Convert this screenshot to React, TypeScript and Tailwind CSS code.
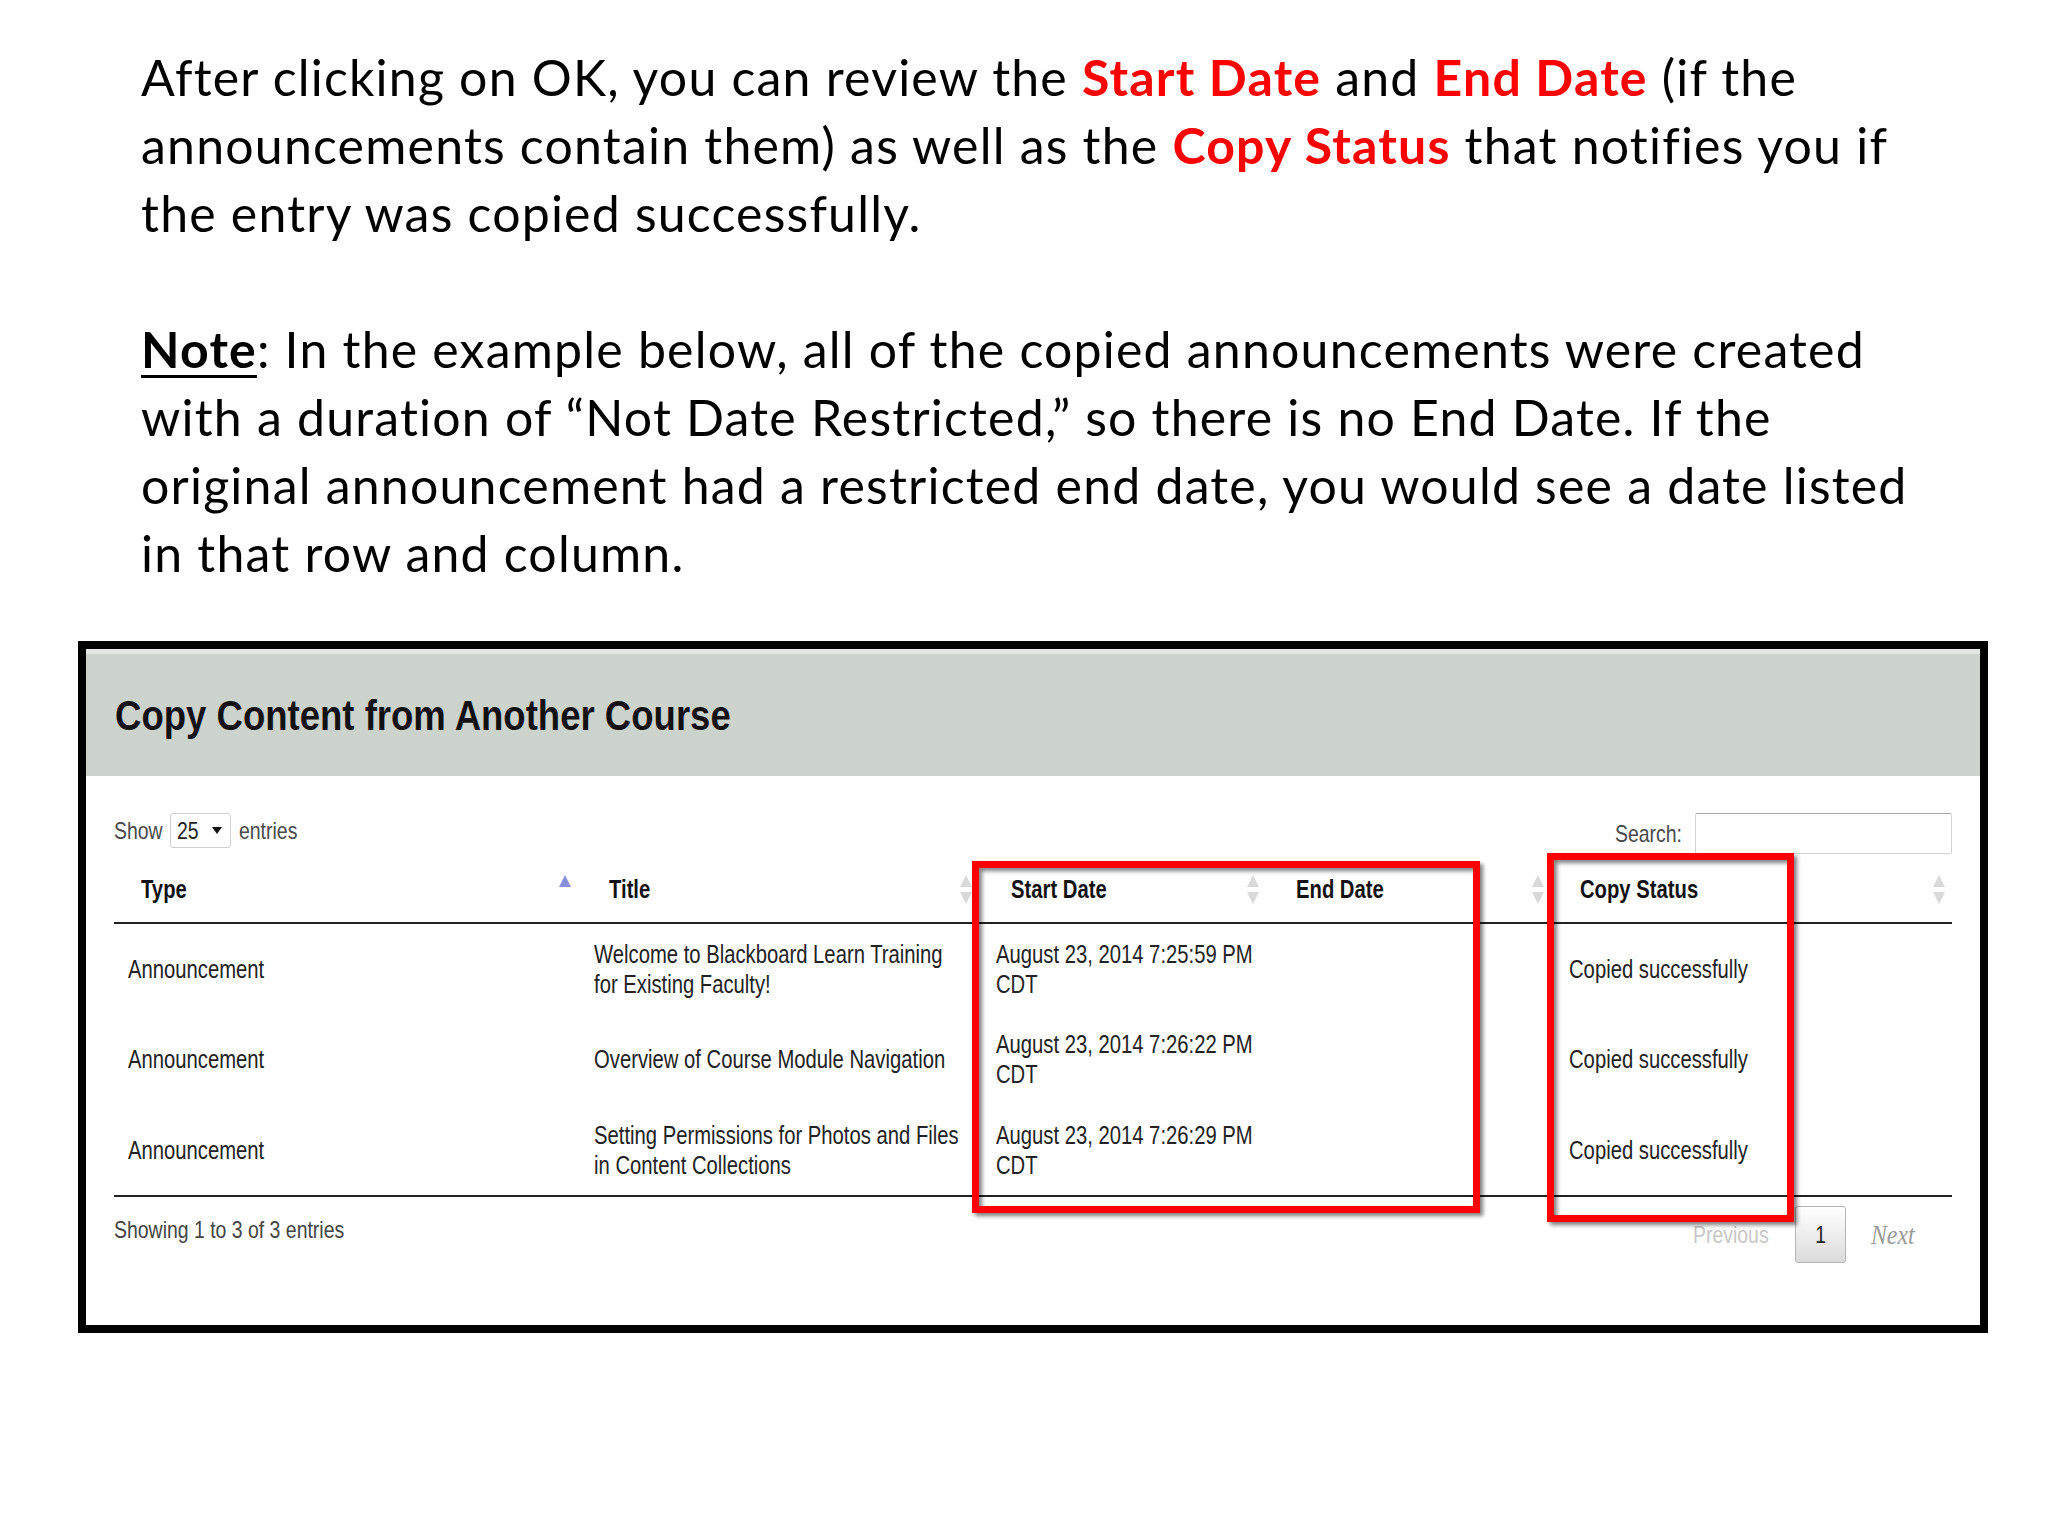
import React from 'react';

const N = 'inline-block origin-left scale-x-[0.81] whitespace-nowrap';
const RED = 'font-bold text-[#ff0000]';

function SortIcon({ asc = false }: { asc?: boolean }) {
  return (
    <svg width="12" height="29" viewBox="0 0 12 29" className="shrink-0">
      <polygon points="6,0 12,12 0,12" fill={asc ? '#8a8fdc' : '#d9d9d9'} />
      {!asc && <polygon points="0,17 12,17 6,29" fill="#d9d9d9" />}
    </svg>
  );
}

const rows = [
  {
    title: ['Welcome to Blackboard Learn Training', 'for Existing Faculty!'],
    start: ['August 23, 2014 7:25:59 PM', 'CDT'],
    h: 'h-[90px]',
  },
  {
    title: ['Overview of Course Module Navigation'],
    start: ['August 23, 2014 7:26:22 PM', 'CDT'],
    h: 'h-[90px]',
  },
  {
    title: ['Setting Permissions for Photos and Files', 'in Content Collections'],
    start: ['August 23, 2014 7:26:29 PM', 'CDT'],
    h: 'h-[91px]',
  },
];

function Lines({ lines }: { lines: string[] }) {
  return (
    <span className={N}>
      {lines.map((l, i) => (
        <React.Fragment key={i}>
          {i > 0 && <br />}
          {l}
        </React.Fragment>
      ))}
    </span>
  );
}

export default function App() {
  return (
    <div className="w-[2048px] h-[1536px] bg-white overflow-hidden">
      {/* slide text */}
      <div className="pl-[141px] pt-[43px] font-['Lato',sans-serif] text-[50px] leading-[68px] tracking-[1.2px] text-black">
        <div className="whitespace-nowrap">
          After clicking on OK, you can review the <span className={RED}>Start Date</span> and{' '}
          <span className={RED}>End Date</span> (if the
        </div>
        <div className="whitespace-nowrap">
          announcements contain them) as well as the <span className={RED}>Copy Status</span> that notifies you if
        </div>
        <div className="whitespace-nowrap">the entry was copied successfully.</div>
        <div className="h-[68px]" />
        <div className="whitespace-nowrap">
          <span className="font-bold underline decoration-[3px] underline-offset-[7px]">Note</span>: In the example
          below, all of the copied announcements were created
        </div>
        <div className="whitespace-nowrap">
          with a duration of “Not Date Restricted,” so there is no End Date. If the
        </div>
        <div className="whitespace-nowrap">
          original announcement had a restricted end date, you would see a date listed
        </div>
        <div className="whitespace-nowrap">in that row and column.</div>
      </div>

      {/* screenshot */}
      <div className="relative mt-[54px] ml-[78px] w-[1910px] h-[692px] border-8 border-black font-['Liberation_Sans',Arial,sans-serif]">
        <div className="h-[127px] bg-[#ccd2cc] border-t-[5px] border-[#e2e5e2] pl-[29px] flex items-center">
          <span className="inline-block origin-left scale-x-[0.87] whitespace-nowrap text-[42px] font-bold text-[#111]">
            Copy Content from Another Course
          </span>
        </div>

        <div className="px-[28px] pt-[37px]">
          {/* controls */}
          <div className="h-[44px] flex justify-between items-start text-[24px] text-[#4a4a4a]">
            <div className="h-[35px] flex items-center">
              <div className="w-[56px]">
                <span className={N}>Show</span>
              </div>
              <div className="w-[61px] h-[35px] border border-[#cfcfcf] rounded-[3px] flex items-center justify-between pl-[6px] pr-[8px] text-[#222]">
                <span className={N}>25</span>
                <svg width="10" height="7" viewBox="0 0 10 7">
                  <polygon points="0,0 10,0 5,7" fill="#111" />
                </svg>
              </div>
              <div className="ml-[8px]">
                <span className={N}>entries</span>
              </div>
            </div>
            <div className="flex items-center">
              <div className="w-[80px]">
                <span className={N}>Search:</span>
              </div>
              <div className="w-[257px] h-[41px] border border-[#d4d4d4] border-t-[#a9a9a9] rounded-[2px]" />
            </div>
          </div>

          {/* table head */}
          <div className="h-[67px] flex items-center border-b-2 border-[#222] text-[25px] font-bold text-[#111]">
            <div className="w-[466px] h-full flex items-center justify-between pl-[27px] pr-[9px]">
              <span className={N}>Type</span>
              <SortIcon asc />
            </div>
            <div className="w-[402px] h-full flex items-center justify-between pl-[29px] pr-[10px]">
              <span className={N}>Title</span>
              <SortIcon />
            </div>
            <div className="w-[287px] h-full flex items-center justify-between pl-[29px] pr-[10px]">
              <span className={N}>Start Date</span>
              <SortIcon />
            </div>
            <div className="w-[284px] h-full flex items-center justify-between pl-[27px] pr-[9px]">
              <span className={N}>End Date</span>
              <SortIcon />
            </div>
            <div className="flex-1 h-full flex items-center justify-between pl-[27px] pr-[7px]">
              <span className={N}>Copy Status</span>
              <SortIcon />
            </div>
          </div>

          {/* rows */}
          <div className="border-b-2 border-[#222] text-[25px] leading-[30px] text-[#222]">
            {rows.map((r, i) => (
              <div key={i} className={`${r.h} flex items-center`}>
                <div className="w-[466px] pl-[14px]">
                  <span className={N}>Announcement</span>
                </div>
                <div className="w-[402px] pl-[14px]">
                  <Lines lines={r.title} />
                </div>
                <div className="w-[287px] pl-[14px]">
                  <Lines lines={r.start} />
                </div>
                <div className="w-[284px]" />
                <div className="flex-1 pl-[16px]">
                  <span className={N}>Copied successfully</span>
                </div>
              </div>
            ))}
          </div>

          {/* footer */}
          <div className="flex justify-between items-start text-[24px] leading-[30px]">
            <div className="pt-[18px] text-[#444]">
              <span className={N}>Showing 1 to 3 of 3 entries</span>
            </div>
            <div className="pt-[9px] pr-[36px] flex items-center">
              <div className="w-[75px] text-[#c8c8c8]">
                <span className={N}>Previous</span>
              </div>
              <div className="ml-[27px] w-[51px] h-[57px] rounded-[3px] border border-[#b5b5b5] bg-gradient-to-b from-white to-[#dcdcdc] flex items-center justify-center text-[#222]">
                <span className="inline-block scale-x-[0.81]">1</span>
              </div>
              <div className="ml-[25px] w-[45px] text-[#9a9a9a] font-['Liberation_Serif',serif] italic text-[28px]">
                <span className="inline-block origin-left scale-x-[0.85]">Next</span>
              </div>
            </div>
          </div>
        </div>

        {/* highlight frames */}
        <div className="absolute left-[886px] top-[212px] w-[508px] h-[352px] border-[7px] border-[#ff0000] shadow-[3px_3px_4px_rgba(0,0,0,0.5),inset_3px_3px_4px_rgba(0,0,0,0.5)]" />
        <div className="absolute left-[1461px] top-[204px] w-[247px] h-[369px] border-[7px] border-[#ff0000] shadow-[3px_3px_4px_rgba(0,0,0,0.5),inset_3px_3px_4px_rgba(0,0,0,0.5)]" />
      </div>
    </div>
  );
}
